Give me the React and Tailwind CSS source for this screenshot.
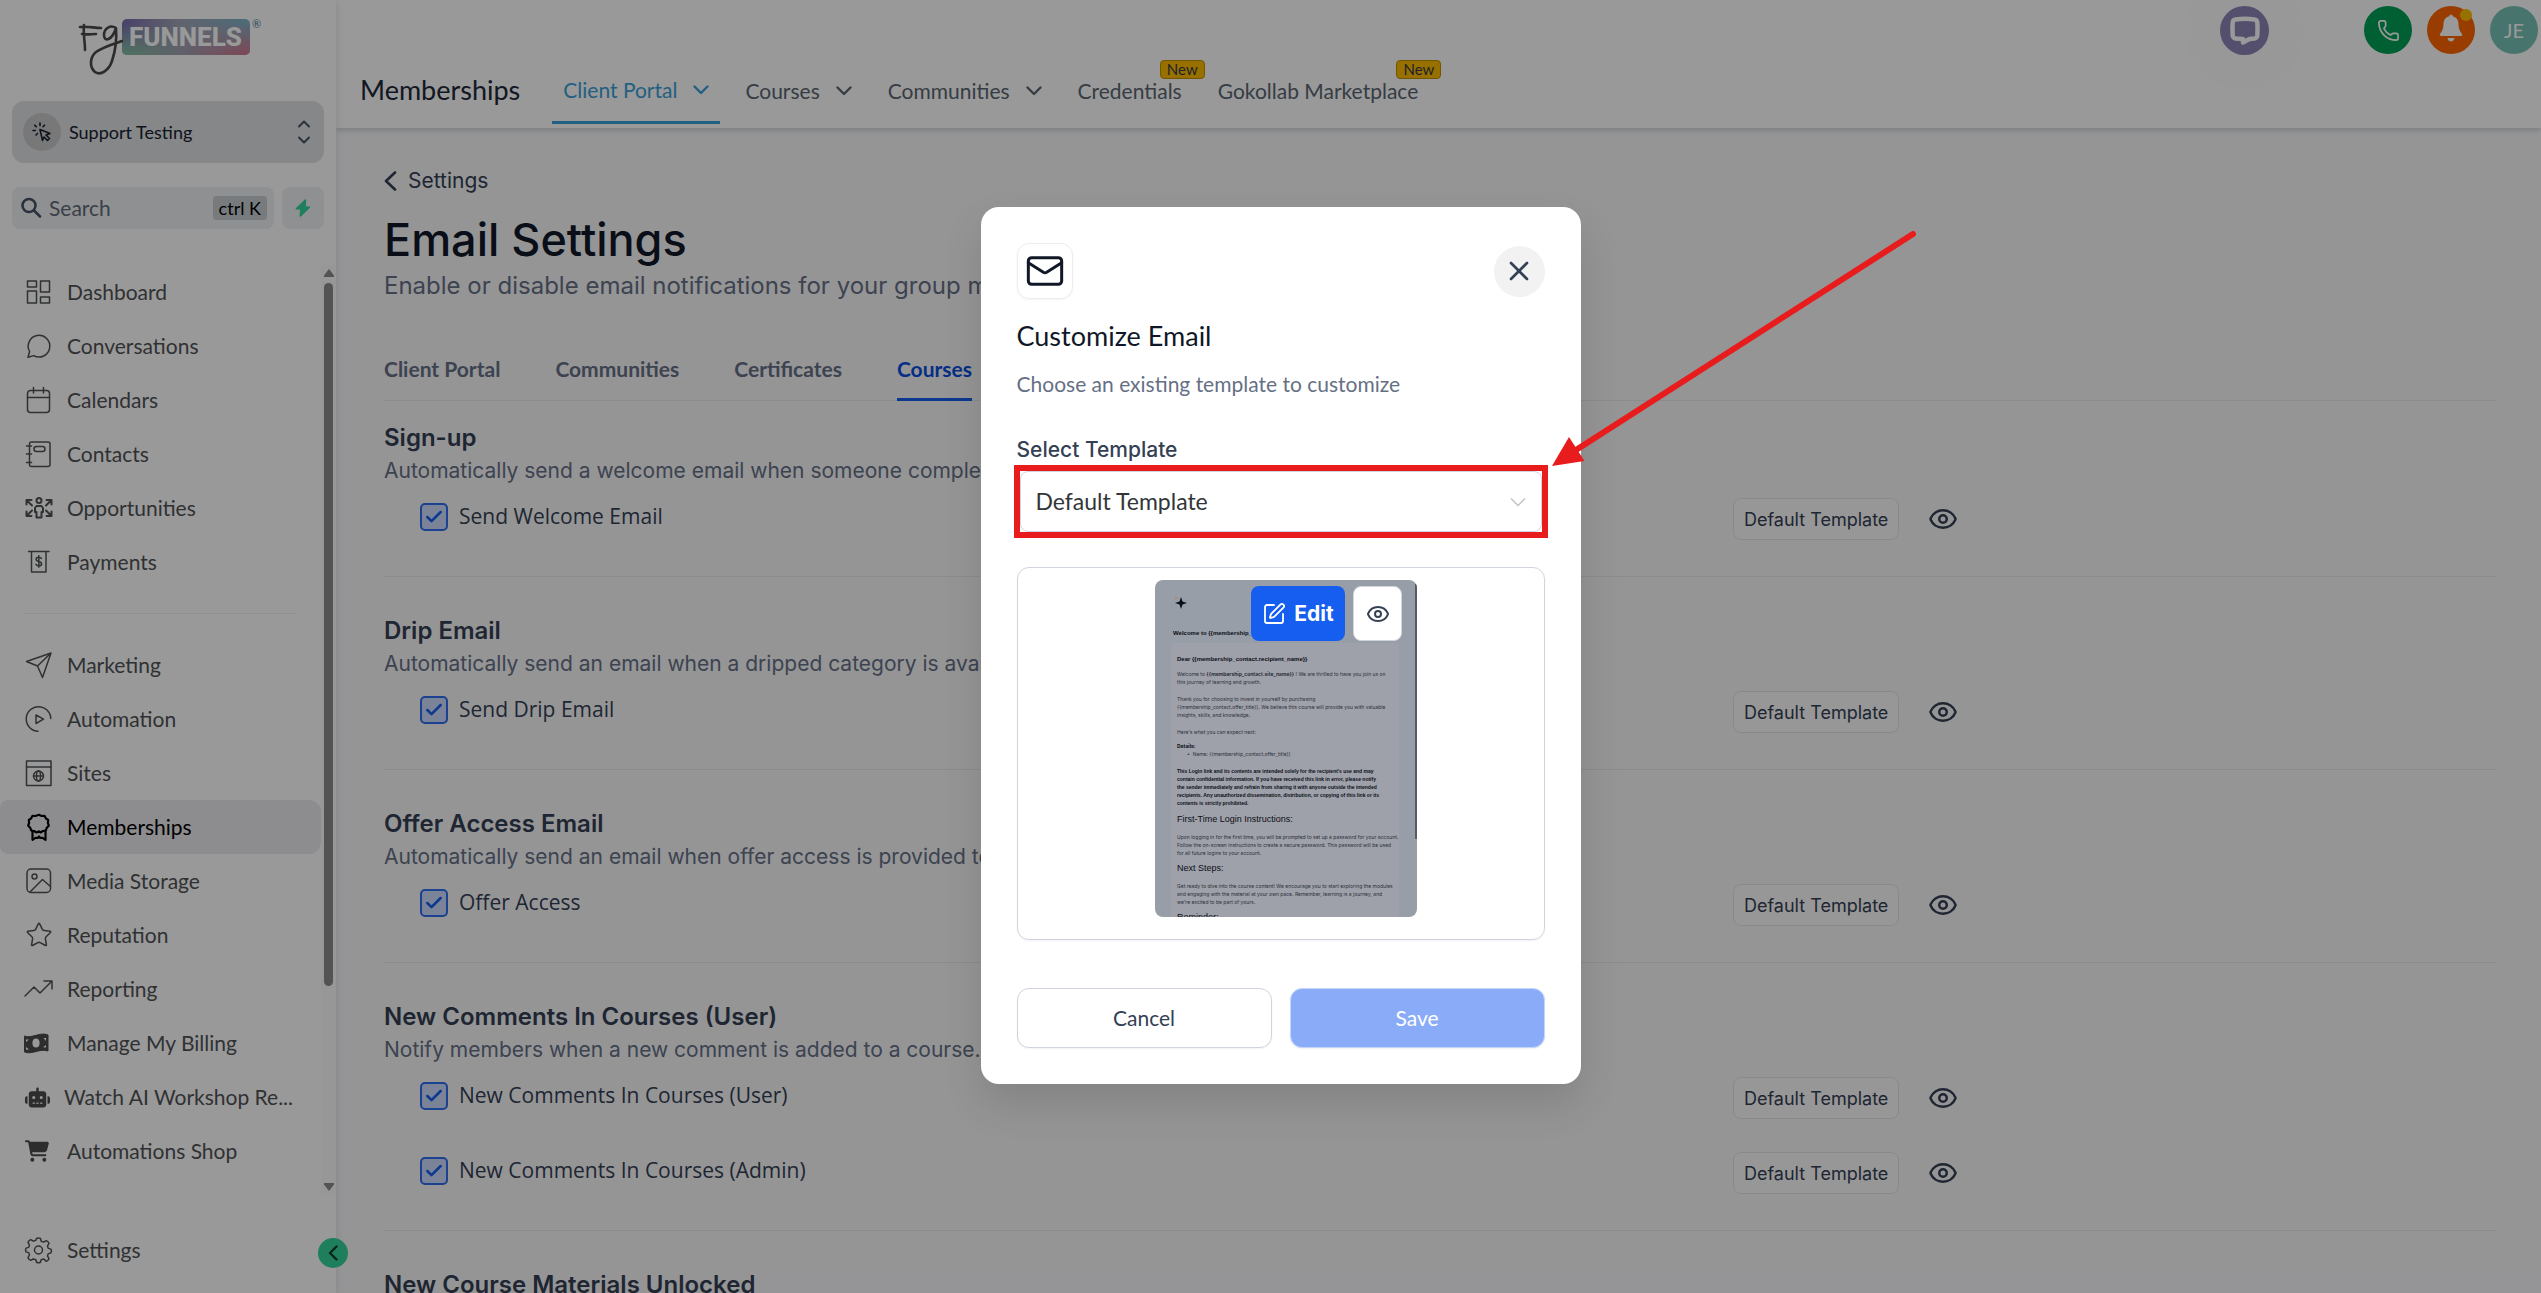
import { Check, Eye, Mail, Phone, SquarePen, Star, X } from 'lucide-react';
import { FaCartShopping, FaRobot } from 'react-icons/fa6';

const stroke = {
  fill: 'none',
  stroke: 'currentColor',
  strokeWidth: 1.5,
  strokeLinecap: 'round',
  strokeLinejoin: 'round',
};

function NavIcon({ children }) {
  return (
    <svg viewBox="0 0 26 26" className="size-[26px] shrink-0 overflow-visible" {...stroke}>
      {children}
    </svg>
  );
}

const mainItems = [
  {
    label: 'Dashboard',
    icon: (
      <NavIcon>
        <rect x="2.5" y="2" width="9" height="6" />
        <rect x="15.5" y="2" width="9" height="11" />
        <rect x="2.5" y="12" width="9" height="12" />
        <rect x="15.5" y="18" width="9" height="6" />
      </NavIcon>
    ),
  },
  {
    label: 'Conversations',
    icon: (
      <NavIcon>
        <path d="M3 24.3l1.6-5.8A10.8 10.8 0 1 1 8.7 22.6L3 24.3z" />
      </NavIcon>
    ),
  },
  {
    label: 'Calendars',
    icon: (
      <NavIcon>
        <rect x="2.5" y="3.5" width="22" height="22" rx="3" />
        <path d="M2.5 10.500h22M8.500 0.500v5.500M18.500 0.500v5.500" />
      </NavIcon>
    ),
  },
  {
    label: 'Contacts',
    icon: (
      <NavIcon>
        <rect x="4.500" y="1" width="20.500" height="24.500" rx="2" />
        <rect x="9" y="5.500" width="11" height="5" rx="2.500" />
        <path d="M1.500 5h5M1.500 13h5M1.500 21.500h5" />
      </NavIcon>
    ),
  },
  {
    label: 'Opportunities',
    icon: (
      <NavIcon>
        <g strokeWidth="2">
          <circle cx="14" cy="5.500" r="2.500" />
          <path d="M11.500 11h5l1.500 2v4h-1.500v5.500h-5V17H10v-4z" />
          <path d="M1.500 9.500V5h5M2 5.500l5 5M26.500 9.500V5h-5M26 5.500l-5 5M1.500 16.500V21h5M2 20.500l5-5M26.500 16.500V21h-5M26 20.500l-5-5" />
        </g>
      </NavIcon>
    ),
  },
  {
    label: 'Payments',
    icon: (
      <NavIcon>
        <path d="M3.500 2.500h20.500M6.500 3v20h14.500V3" />
        <path d="M16.500 9.500c-.5-1-1.500-1.300-2.700-1.300-1.600 0-2.700.8-2.700 2.100 0 3 5.500 1.400 5.500 4.400 0 1.300-1.200 2.100-2.800 2.100-1.400 0-2.500-.5-2.900-1.500M13.800 6.800v11.500" />
      </NavIcon>
    ),
  },
];

const toolItems = [
  {
    label: 'Marketing',
    icon: (
      <NavIcon>
        <path d="M1.500 9.500L26 1l-8.500 24.500-5-11.500zM12.500 14L26 1" />
      </NavIcon>
    ),
  },
  {
    label: 'Automation',
    icon: (
      <NavIcon>
        <path d="M13 25.300A12.300 12.300 0 1 1 25.800 12.500" />
        <path d="M11 9l7.500 4.200L11 17.500z" />
      </NavIcon>
    ),
  },
  {
    label: 'Sites',
    icon: (
      <NavIcon>
        <rect x="1.500" y="1" width="24.500" height="24.500" />
        <path d="M1.500 7H26" />
        <circle cx="13.500" cy="16" r="5" />
        <ellipse cx="13.500" cy="16" rx="2" ry="5" />
        <path d="M8.500 16h10" />
      </NavIcon>
    ),
  },
  {
    label: 'Memberships',
    active: true,
    icon: (
      <NavIcon>
        <g strokeWidth="2.200">
          <path d="M14 .8l2.600 1.200 2.900-.2 1.300 2.500 2.400 1.700-.3 2.900.9 2.800-2 2-1 2.800-2.900.5-2.400 1.500L14 17.300l-2.500 1.200-2.400-1.500-2.900-.5-1-2.800-2-2 .9-2.800-.3-2.900 2.400-1.700 1.300-2.500 2.900.2z" />
          <path d="M7.500 17.500v8.300l3-2 2.500 0 1-1.300 1 1.300 2.500 0 3 2v-8.300" />
        </g>
      </NavIcon>
    ),
  },
  {
    label: 'Media Storage',
    icon: (
      <NavIcon>
        <rect x="2" y="1" width="23.500" height="23.500" rx="4" />
        <circle cx="9.500" cy="8.500" r="2.500" />
        <path d="M5 24L17.500 11.500l8 7" />
      </NavIcon>
    ),
  },
  { label: 'Reputation', icon: <Star className="size-[28px] -mr-0.5 shrink-0" strokeWidth={1.3} /> },
  {
    label: 'Reporting',
    icon: (
      <NavIcon>
        <path d="M0 20L9 11l6 6L27 5M19 5h8v8" />
      </NavIcon>
    ),
  },
  {
    label: 'Manage My Billing',
    icon: (
      <svg viewBox="0 0 26 26" className="size-[26px] shrink-0 overflow-visible">
        <path
          d="M-.5 6C7 9 15 1.500 23 5v16c-8-3-16 4-23.500 1z"
          fill="#4b4b4b"
          stroke="#4b4b4b"
          strokeLinejoin="round"
        />
        <ellipse cx="11" cy="13" rx="3.600" ry="4.500" fill="#fff" />
        <path d="M1 9.500h3L1 12zM21 8v3l-2.500-3zM1 17v2.800l3-.4zM21 17.500v-2.600l-3 2.300z" fill="#fff" />
      </svg>
    ),
  },
  { label: 'Watch AI Workshop Re...', icon: <FaRobot className="size-[25px] -mr-0.5 shrink-0 text-[#4b4b4b]" /> },
  { label: 'Automations Shop', icon: <FaCartShopping className="size-[24px] mr-0.5 shrink-0 text-[#4b4b4b]" /> },
];

const sections = [
  {
    title: 'Sign-up',
    text: 'Automatically send a welcome email when someone completes a sign-up.',
    options: ['Send Welcome Email'],
  },
  {
    title: 'Drip Email',
    text: 'Automatically send an email when a dripped category is available.',
    options: ['Send Drip Email'],
  },
  {
    title: 'Offer Access Email',
    text: 'Automatically send an email when offer access is provided to a user.',
    options: ['Offer Access'],
  },
  {
    title: 'New Comments In Courses (User)',
    text: 'Notify members when a new comment is added to a course.',
    options: ['New Comments In Courses (User)', 'New Comments In Courses (Admin)'],
  },
  { title: 'New Course Materials Unlocked', text: '', options: [] },
];

function Chevron({ className = '' }) {
  return (
    <svg viewBox="0 0 16 10" className={`w-4 h-2.5 ${className}`} {...stroke} strokeWidth="2.4">
      <path d="M1.500 1.500L8 8l6.500-6.500" />
    </svg>
  );
}

function Logo() {
  return (
    <svg viewBox="0 0 190 62" className="w-[190px] h-[62px]" role="img" aria-label="FG Funnels">
      <defs>
        <linearGradient id="logoTop" x1="0" x2="1">
          <stop offset="0" stopColor="#7b6bb0" />
          <stop offset=".45" stopColor="#a3a6b8" />
          <stop offset="1" stopColor="#7fb3c8" />
        </linearGradient>
        <linearGradient id="logoBottom" x1="0" x2="1">
          <stop offset="0" stopColor="#7fc0a0" />
          <stop offset=".5" stopColor="#a39db0" />
          <stop offset="1" stopColor="#d4778e" />
        </linearGradient>
        <linearGradient id="logoFade" x1="0" x2="0" y1="0" y2="1">
          <stop offset=".1" stopColor="#000" />
          <stop offset=".95" stopColor="#fff" />
        </linearGradient>
        <mask id="logoMask">
          <rect x="44" y="2" width="128" height="36" fill="url(#logoFade)" />
        </mask>
      </defs>
      <rect x="44" y="2" width="128" height="36" rx="5" fill="url(#logoTop)" />
      <rect x="44" y="2" width="128" height="36" rx="5" fill="url(#logoBottom)" mask="url(#logoMask)" />
      <g fill="none" stroke="#4a4a4a" strokeWidth="2.600" strokeLinecap="round">
        <path d="M2 10c8-1 14 1 21 1M6 8c-1 8 1 17 1 25M4 17c5 1 9 0 14 0" />
        <path d="M38 11c-6-4-12 1-12 7 0 7 8 6 12-7 1 12-1 24-4 33-3 9-11 15-17 11-6-5-5-15 1-20 7-5 17-8 26-11" />
      </g>
      <text x="51" y="29" fontSize="26" className="font-['Roboto'] font-extrabold" fill="#fff">
        FUNNELS
      </text>
      <text x="174" y="11" fontSize="11" className="font-['Lato']" fill="#3f8096">
        ®
      </text>
    </svg>
  );
}

function NavLink({ item }) {
  return (
    <a
      href="#"
      className={`flex items-center gap-4 h-[54px] mr-[15px] pl-[25px] text-[21px] whitespace-nowrap rounded-r-xl rounded-l-lg ${
        item.active ? 'bg-[#ececef] text-black' : 'text-[#505356]'
      }`}
    >
      {item.icon}
      {item.label}
    </a>
  );
}

function Sidebar() {
  return (
    <aside className="relative z-10 flex flex-col w-[336px] h-full shrink-0 bg-white shadow-[0_2px_8px_rgba(0,0,0,0.12)]">
      <div className="h-[101px] pt-[17px] pl-[78px]">
        <Logo />
      </div>
      <button className="flex items-center gap-2 mx-3 h-[62px] px-[11px] rounded-xl bg-[#dee1e5] text-[18px] text-[#16202e] shrink-0">
        <span className="flex items-center justify-center size-[38px] rounded-full bg-[#c9c9ca]">
          <svg viewBox="0 0 20 20" className="size-5" {...stroke} strokeWidth="1.600">
            <path d="M8 7.500l10 4-4 1.500 3.500 3.500-2 2-3.500-3.500-1.500 3.500z" />
            <path d="M8 1v2.500M2.800 3.200l1.500 1.500M1 8.500h2.300M4 13l1.500-1.500M12.500 3.200L11 4.700" />
          </svg>
        </span>
        Support Testing
        <span className="ml-auto flex flex-col gap-2 mr-[3px] text-[#475467]">
          <svg viewBox="0 0 12 8" className="w-3 h-2" {...stroke} strokeWidth="2">
            <path d="M1 6.500l5-5 5 5" />
          </svg>
          <svg viewBox="0 0 12 8" className="w-3 h-2" {...stroke} strokeWidth="2">
            <path d="M1 1.500l5 5 5-5" />
          </svg>
        </span>
      </button>
      <div className="flex gap-2 mx-3 mt-6 h-[42px] shrink-0">
        <label className="flex items-center flex-1 min-w-0 gap-[7px] pl-2 pr-[7px] rounded-lg bg-[#eff0f4]">
          <svg viewBox="0 0 22 22" className="size-[22px] shrink-0 text-[#475467]" {...stroke} strokeWidth="2.600">
            <circle cx="9" cy="8.500" r="6.500" />
            <path d="M14 13.500l6 6" />
          </svg>
          <input
            type="text"
            aria-label="Search"
            placeholder="Search"
            className="flex-1 min-w-0 text-[21px] bg-transparent outline-none placeholder:text-[#5f6b7a]"
          />
          <kbd className="h-6 px-1.5 rounded-sm bg-[#c9ced3] font-['Lato'] text-[18px] leading-6 text-black">ctrl K</kbd>
        </label>
        <button aria-label="Quick actions" className="flex items-center justify-center w-[42px] rounded-lg bg-[#eff0f4]">
          <svg viewBox="0 0 16 18" className="w-4 h-[18px] text-[#34d399]" fill="currentColor">
            <path d="M9.800.5L.8 9.200c-.4.500-.2 1.200.5 1.200l3.700.2L4.500 16.800c0 .9.900 1.200 1.500.6l9-8.700c.4-.5.200-1.200-.5-1.200l-3.700-.2.500-6.200c0-.9-.9-1.200-1.500-.6z" />
          </svg>
        </button>
      </div>
      <div className="relative mt-9 h-[930px] shrink-0">
        <nav>
          {mainItems.map((item) => (
            <NavLink key={item.label} item={item} />
          ))}
          <hr className="mt-6 mb-6 ml-6 mr-[39px] border-[#eeeff1]" />
          {toolItems.map((item) => (
            <NavLink key={item.label} item={item} />
          ))}
        </nav>
        <div className="absolute inset-y-0 right-0 w-[15px] flex flex-col items-center bg-[#fcfcfc]">
          <svg viewBox="0 0 10 8" className="w-2.5 h-2 mt-1" fill="#8a8a8a">
            <path d="M5 0l5 6.500V8H0V6.500z" />
          </svg>
          <div className="mt-[6px] w-[9px] h-[703px] rounded-full bg-[#8a8a8a]" />
          <svg viewBox="0 0 10 8" className="w-2.5 h-2 mt-auto mb-1" fill="#8a8a8a">
            <path d="M5 8L10 1.500V0H0v1.500z" />
          </svg>
        </div>
      </div>
      <div className="mt-7">
        <NavLink
          item={{
            label: 'Settings',
            icon: (
              <NavIcon>
                <circle cx="13.500" cy="13" r="4" />
                <path d="M11.500 1.500c1.300-.7 2.700-.7 4 0l.6 2.700c1 .6 1.700.9 2.700.8l2.500-1.400c1.200.5 2.200 1.400 2.700 2.700l-1.400 2.500c0 1 .2 1.700.8 2.600l2.600.7c.6 1.200.6 2.500 0 3.800l-2.600.7c-.6.900-.8 1.600-.8 2.600l1.400 2.500c-.5 1.300-1.500 2.200-2.700 2.700L18.800 22c-1 0-1.700.200-2.700.800l-.6 2.500c-1.300.6-2.700.6-4 0l-.6-2.500c-1-.6-1.700-.8-2.700-.8l-2.500 1.400C4.500 22.900 3.500 22 3 20.700l1.400-2.500c0-1-.2-1.700-.8-2.600L1 14.900c-.6-1.300-.6-2.600 0-3.800l2.600-.7c.6-.9.8-1.600.8-2.600L3 5.300c.5-1.300 1.500-2.200 2.700-2.700L8.200 4c1 .1 1.700-.2 2.700-.8z" />
              </NavIcon>
            ),
          }}
        />
      </div>
      <button
        aria-label="Collapse sidebar"
        className="absolute -right-3 bottom-[25px] flex items-center justify-center size-[30px] rounded-full bg-[#34d399] text-[#123c2e]"
      >
        <Chevron className="rotate-90" />
      </button>
    </aside>
  );
}

function NewBadge() {
  return (
    <span className="absolute -top-[17px] -right-3 px-1.5 h-[19px] rounded-sm border border-[#c28e00] bg-[#fdbb00] text-[15px] leading-[17px] text-[#333a44]">
      New
    </span>
  );
}

function Header() {
  return (
    <header className="flex h-32 shrink-0 justify-between bg-white shadow-[0_2px_6px_rgba(0,0,0,0.18)]">
      <div className="flex items-end pb-1 pl-6 whitespace-nowrap">
        <h2 className="mr-8 pb-[17px] text-[27px] leading-[34px] text-[#1d2939]">Memberships</h2>
        <nav className="flex items-end gap-3.5 text-[21px] leading-7 text-[#5a6672]">
          <a href="#" className="flex items-center gap-4 px-[11px] pb-[17px] border-b-3 border-[#3aa0d8] text-[#3aa0d8]">
            Client Portal <Chevron />
          </a>
          <a href="#" className="flex items-center gap-4 px-[11px] pb-[19px]">
            Courses <Chevron />
          </a>
          <a href="#" className="flex items-center gap-4 px-[11px] pb-[19px]">
            Communities <Chevron />
          </a>
          <a href="#" className="relative px-[11px] pb-[19px]">
            Credentials <NewBadge />
          </a>
          <a href="#" className="relative px-[11px] pb-[19px]">
            Gokollab Marketplace <NewBadge />
          </a>
        </nav>
      </div>
      <div className="flex gap-[15px] pt-1.5 pr-[3px]">
        <button
          aria-label="Chat"
          className="flex items-center justify-center size-[49px] mr-20 rounded-full bg-[#8c84b6] shadow-[0_0_0_35px_rgba(0,0,0,0.006)]"
        >
          <svg viewBox="0 0 32 32" className="size-8" fill="none" stroke="#fff" strokeWidth="4.500" strokeLinejoin="round">
            <path d="M6.500 4.500Q16 3 25.500 4.500 28 4.800 28.300 7.500 28.800 14 28.300 20.500 28 23 25.500 23.500L20.500 24 14 27.500V24L6.500 23.500Q4 23 3.700 20.500 3.200 14 3.700 7.500 4 4.800 6.500 4.500z" />
          </svg>
        </button>
        <button aria-label="Call" className="flex items-center justify-center size-12 rounded-full bg-[#00a156] text-white">
          <Phone className="size-[23px]" strokeWidth={1.8} />
        </button>
        <button aria-label="Notifications" className="relative flex items-center justify-center size-12 rounded-full bg-[#ff6500]">
          <svg viewBox="0 0 24 28" className="w-6 h-7 -mt-1" fill="#fff">
            <path d="M12 .5c1 0 1.700.7 1.700 1.800 3.800.8 5.800 3.700 5.800 7.700 0 4.500 1.200 7 3.500 10 .6.900.2 2-1 2H2c-1.200 0-1.600-1.100-1-2 2.300-3 3.500-5.500 3.500-10 0-4 2-6.900 5.800-7.700C10.300 1.200 11 .5 12 .5zM8.500 24h7c-.3 2-1.700 3.500-3.500 3.500S8.800 26 8.500 24z" />
          </svg>
          <span className="absolute top-[3px] right-[3px] size-3 rounded-full bg-[#fdbf00]" />
        </button>
        <button className="size-12 rounded-full bg-[#79c1b7] text-[20px] text-white">JE</button>
      </div>
    </header>
  );
}

function OptionRow({ label }) {
  return (
    <div className="grid grid-cols-[minmax(0,1349fr)_763fr] h-[42px]">
      <label className="flex items-center gap-[11px] h-[38px] pl-9 font-['Open_Sans'] text-[21px] text-[#344054]">
        <span className="relative size-7">
          <input
            type="checkbox"
            defaultChecked
            className="block appearance-none size-7 rounded-[5px] border-2 border-[#2f6df0] bg-[#cbdafc]"
          />
          <Check className="absolute inset-1 size-5 text-[#155eef] pointer-events-none" strokeWidth={3} />
        </span>
        {label}
      </label>
      <div className="flex items-center gap-[29px]">
        <button className="h-[42px] px-2.5 rounded-lg border border-[#e4e4ea] bg-[#fcfcfc] text-[18px] text-[#344054] font-['Inter']">
          Default Template
        </button>
        <button aria-label="Preview" className="text-[#344054]">
          <Eye className="size-[30px]" strokeWidth={2} />
        </button>
      </div>
    </div>
  );
}

function EmailSettings() {
  const tabs = ['Client Portal', 'Communities', 'Certificates', 'Courses'];
  return (
    <main className="flex-1 min-h-0 overflow-hidden pt-9 pl-12 pr-[45px] font-['Inter']">
      <a href="#" className="flex items-center gap-[11px] h-[34px] text-[21px] text-[#344054]">
        <svg viewBox="0 0 13 20" className="w-[13px] h-5" {...stroke} strokeWidth="2.600">
          <path d="M11 1.500L2 10l9 8.500" />
        </svg>
        Settings
      </a>
      <h1 className="mt-[15px] text-[45px] leading-[54px] font-medium text-[#101828]">Email Settings</h1>
      <p className="mt-px text-[24px] leading-9 text-[#667085]">
        Enable or disable email notifications for your group members.
      </p>
      <div className="flex gap-[55px] mt-[51px] h-[46px] border-b border-[#e6e8ec] font-['Lato'] font-bold text-[21px] leading-7">
        {tabs.map((tab) => (
          <a
            key={tab}
            href="#"
            className={`h-[46px] ${tab === 'Courses' ? 'text-[#0a4ee0] border-b-3 border-[#155eef]' : 'text-[#667085]'}`}
          >
            {tab}
          </a>
        ))}
      </div>
      {sections.map((section) => (
        <section key={section.title} className="pt-9 pb-9 border-b border-[#e6e8ec] first-of-type:pt-[19px]">
          <h3 className="text-[24px] leading-9 font-semibold text-[#344054]">{section.title}</h3>
          <p className="text-[21px] leading-[30px] text-[#667085]">{section.text}</p>
          <div className="flex flex-col gap-[33px] mt-3">
            {section.options.map((option) => (
              <OptionRow key={option} label={option} />
            ))}
          </div>
        </section>
      ))}
    </main>
  );
}

function TemplatePreview() {
  return (
    <div className="relative w-[262px] h-[337px] overflow-hidden rounded-lg bg-[#989ea8] font-['Inter'] text-[5px] leading-[8px] text-[#2c303a] whitespace-nowrap">
      <svg viewBox="0 0 14 14" className="size-3.5 mt-4 ml-[19px]">
        <path d="M7 1l1.500 4.500L13 7 8.500 8.500 7 13 5.500 8.500 1 7l4.500-1.500z" fill="#0b0e17" />
        <circle cx="2" cy="2" r="1" fill="#b08a3a" />
        <circle cx="12.500" cy="4" r=".7" fill="#b08a3a" />
      </svg>
      <p className="mt-[19px] ml-[18px] font-['Liberation_Sans'] font-bold text-[6px] text-[#0b0e17]">
        Welcome to {'{{membership_contact.site_name}}'} Academy !
      </p>
      <div className="mt-1.5 ml-4 w-[228px] h-full pt-3 pl-1.5 rounded-sm bg-[#9ea1a9]">
        <p className="font-['Liberation_Sans'] font-bold text-[6px] text-[#0b0e17]">
          Dear {'{{membership_contact.recipient_name}}'}
        </p>
        <p className="mt-[7px]">
          Welcome to <b>{'{{membership_contact.site_name}}'}</b> ! We are thrilled to have you join us on
          <br />
          this journey of learning and growth.
        </p>
        <p className="mt-[9px]">
          Thank you for choosing to invest in yourself by purchasing
          <br />
          {'{{membership_contact.offer_title}}'}. We believe this course will provide you with valuable
          <br />
          insights, skills, and knowledge.
        </p>
        <p className="mt-[9px]">Here's what you can expect next:</p>
        <p className="mt-1.5 font-bold text-[#0b0e17]">Details:</p>
        <p className="pl-2.5">• &nbsp;Name: {'{{membership_contact.offer_title}}'}</p>
        <p className="mt-[9px] font-['Liberation_Sans'] font-bold text-[#0b0e17]">
          This Login link and its contents are intended solely for the recipient's use and may
          <br />
          contain confidential information. If you have received this link in error, please notify
          <br />
          the sender immediately and refrain from sharing it with anyone outside the intended
          <br />
          recipients. Any unauthorized dissemination, distribution, or copying of this link or its
          <br />
          contents is strictly prohibited.
        </p>
        <h4 className="mt-1.5 font-['Liberation_Sans'] text-[9px] leading-3 text-[#0b0e17]">First-Time Login Instructions:</h4>
        <p className="mt-2">
          Upon logging in for the first time, you will be prompted to set up a password for your account.
          <br />
          Follow the on-screen instructions to create a secure password. This password will be used
          <br />
          for all future logins to your account.
        </p>
        <h4 className="mt-[5px] font-['Liberation_Sans'] text-[9px] leading-3 text-[#0b0e17]">Next Steps:</h4>
        <p className="mt-2">
          Get ready to dive into the course content! We encourage you to start exploring the modules
          <br />
          and engaging with the material at your own pace. Remember, learning is a journey, and
          <br />
          we're excited to be part of yours.
        </p>
        <h4 className="mt-[5px] font-['Liberation_Sans'] text-[9px] leading-3 text-[#0b0e17]">Reminder:</h4>
      </div>
      <span className="absolute top-1 right-0 w-0.5 h-[255px] bg-[#555b66]" />
      <div className="absolute top-1.5 right-[15px] flex gap-2">
        <button className="flex items-center justify-center gap-2 w-[94px] h-[55px] rounded-lg bg-[#155eef] font-['Inter'] font-bold text-[21px] text-white">
          <SquarePen className="size-6" strokeWidth={1.8} />
          Edit
        </button>
        <button
          aria-label="Preview template"
          className="flex items-center justify-center w-[49px] h-[55px] rounded-lg border border-[#d0d5dd] bg-white text-[#344054]"
        >
          <Eye className="size-6" strokeWidth={2} />
        </button>
      </div>
    </div>
  );
}

function CustomizeModal() {
  return (
    <div
      role="dialog"
      aria-modal="true"
      aria-labelledby="modal-title"
      className="relative w-[600px] px-9 pt-9 pb-9 rounded-[18px] bg-white shadow-[0_20px_40px_rgba(0,0,0,0.12)]"
    >
      <div className="flex items-center justify-between">
        <span className="flex items-center justify-center size-14 rounded-xl border border-[#eaecf0] shadow-xs text-[#101828]">
          <Mail className="size-10" strokeWidth={1.8} />
        </span>
        <button aria-label="Close" className="flex items-center justify-center size-[51px] rounded-full bg-[#f2f2f2] text-[#344054]">
          <X className="size-8" strokeWidth={2} />
        </button>
      </div>
      <h2 id="modal-title" className="mt-[18px] text-[27px] leading-[38px] text-[#101828]">
        Customize Email
      </h2>
      <p className="mt-3.5 text-[21px] leading-[30px] text-[#667085]">Choose an existing template to customize</p>
      <label htmlFor="template" className="block mt-9 font-['Inter'] font-medium text-[21px] leading-[30px] text-[#344054]">
        Select Template
      </label>
      <div className="relative mx-[3px] mt-1.5 outline-6 outline-[#e81c1c]">
        <select
          id="template"
          className="block w-full h-[61px] pl-[15px] appearance-none rounded-lg border border-[#d0d5dd] bg-white text-[23px] text-[#333639]"
        >
          <option>Default Template</option>
        </select>
        <svg viewBox="0 0 16 10" className="absolute right-4 top-[26px] w-4 h-2.5 pointer-events-none" fill="none" stroke="#c2c2c8" strokeWidth="1.500">
          <path d="M1 1.500L8 8.500l7-7" />
        </svg>
      </div>
      <div className="flex justify-center mt-[35px] pt-3 pb-[22px] pl-[11px] rounded-xl border border-[#d0d5dd] shadow-xs">
        <TemplatePreview />
      </div>
      <div className="grid grid-cols-2 gap-[18px] mt-12 text-[21px]">
        <button className="h-[60px] rounded-xl border border-[#d0d5dd] bg-white text-[#344054] shadow-xs">Cancel</button>
        <button className="h-[60px] rounded-xl border border-[#c5d6fb] bg-[#8aacf8] text-white shadow-xs">Save</button>
      </div>
      <svg viewBox="0 0 364 236" className="absolute left-[571px] top-[24px] w-[364px] h-[236px] pointer-events-none">
        <path d="M361 3L24 219" stroke="#e81c1c" strokeWidth="6" strokeLinecap="round" />
        <path d="M0 235L17 206l15.500 24z" fill="#e81c1c" />
      </svg>
    </div>
  );
}

export default function App() {
  return (
    <div className="relative flex h-screen overflow-hidden bg-[#f8f9fb] font-['Lato',sans-serif]">
      <Sidebar />
      <div className="flex flex-col flex-1 min-w-0">
        <Header />
        <EmailSettings />
      </div>
      <div className="absolute inset-0 z-20 flex items-center justify-center pl-5 pb-0.5 bg-black/40">
        <CustomizeModal />
      </div>
    </div>
  );
}
